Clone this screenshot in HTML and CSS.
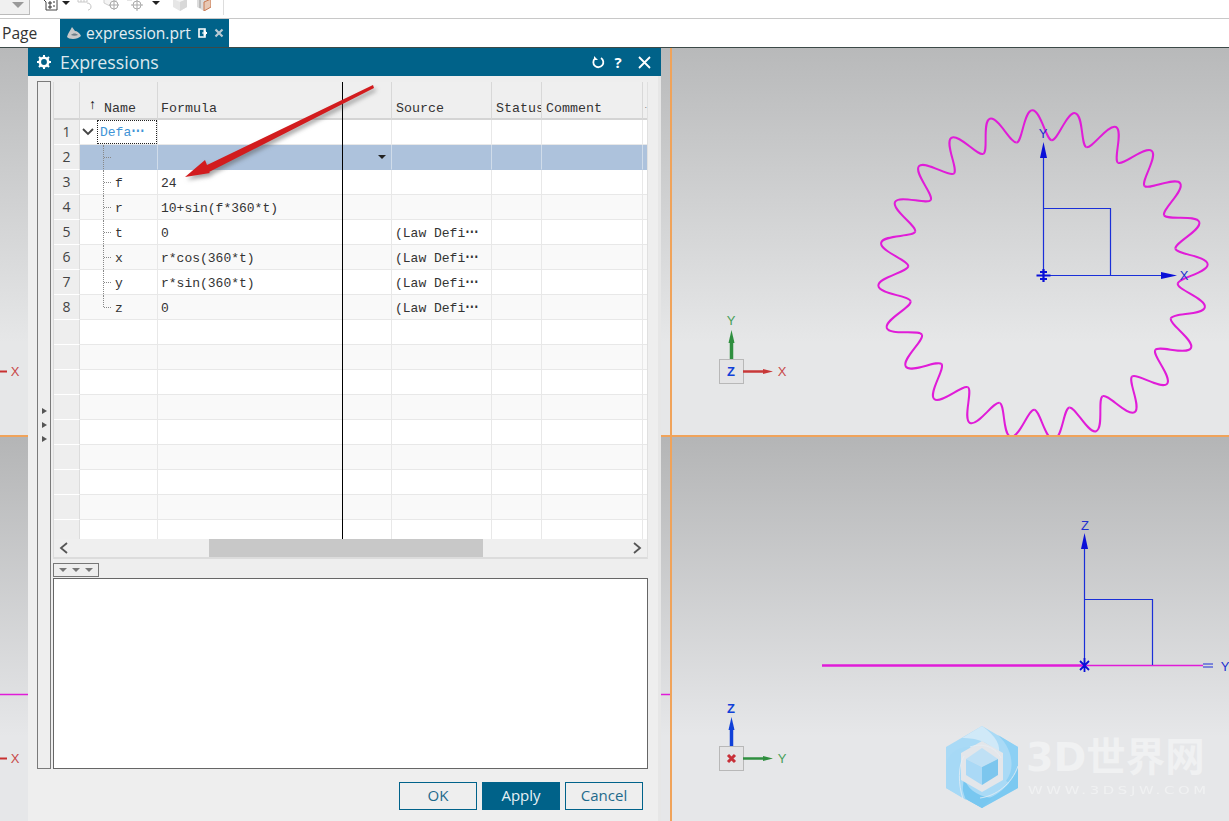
FILE: index.html
```html
<!DOCTYPE html>
<html lang="en">
<head>
<meta charset="utf-8">
<title>Expressions</title>
<link rel="stylesheet" href="styles.css">
</head>
<body>
<div class="app">
  <div class="toolbar">
    <div class="combo"><span class="combo-arrow"></span></div>
    <svg class="tool t1" width="16" height="16" viewBox="0 0 16 16"><path d="M1 4l3 3v8h11V4H5" fill="#fff" stroke="#444"/><path d="M7 7h2v2H7zM11 7h2M7 11h2v2H7zM11 11h2" fill="none" stroke="#333"/></svg>
    <span class="drop d1"></span>
    <svg class="tool t2" width="16" height="16" viewBox="0 0 16 16"><path d="M1 0v7h9V0M4 0v7M7 0v7M1 3h9" fill="none" stroke="#c8c8c8"/><path d="M10 8c3 0 4 2 4 4s-2 3-3 3" fill="none" stroke="#c4c4c4"/></svg>
    <svg class="tool t3" width="16" height="16" viewBox="0 0 16 16"><path d="M1 3l6-3 6 3v5l-6 3-6-3z" fill="#f4f4f4" stroke="#d0d0d0"/><circle cx="11" cy="10" r="4" fill="#fff" stroke="#aaa"/><path d="M11 5v10M6 10h10" stroke="#aaa"/></svg>
    <svg class="tool t4" width="16" height="16" viewBox="0 0 16 16"><path d="M0 5h5" stroke="#ccc"/><circle cx="10" cy="10" r="4" fill="#fff" stroke="#aaa"/><path d="M10 4v12M4 10h12" stroke="#aaa"/></svg>
    <span class="drop d2"></span>
    <svg class="tool t5" width="16" height="16" viewBox="0 0 16 16"><path d="M1 4l7-3 7 3v8l-7 4-7-4z" fill="#e6e6e6"/><path d="M1 4l7 3 7-3-7-3z" fill="#f4f4f4"/><path d="M8 7v9l7-4V4z" fill="#d8d8d8"/></svg>
    <svg class="tool t6" width="14" height="16" viewBox="0 0 14 16"><path d="M0 4l7-3 7 3v8l-7 4-7-4z" fill="#ddd"/><path d="M7 7v9l7-4V4z" fill="#e8c8b4" stroke="#c87850"/><path d="M3 4v9" stroke="#999"/></svg>
    <span class="sep"></span>
  </div>

  <div class="tabbar">
    <span class="tab-plain">Page</span>
    <div class="tab-active">
      <svg class="tab-icon" width="16" height="14" viewBox="0 0 16 14"><path d="M1 11c1-4 3-6 5-10l3 4c2 0 5 2 6 5-2 2-5 3-8 3-3 0-5-1-6-2z" fill="#c9c9c9"/><path d="M5 9c2-2 5-2 7 0-2 1-5 1-7 0z" fill="#6f7f88"/></svg>
      <span>expression.prt</span>
      <svg class="tab-pop" width="10" height="10" viewBox="0 0 10 10"><path d="M7 3V1H1v8h6V7" fill="none" stroke="#fff" stroke-width="1.600"/><path d="M4 5h3M6 2l3 3-3 3z" fill="#fff" stroke="#fff"/></svg>
      <svg class="tab-x" width="10" height="10" viewBox="0 0 10 10"><path d="M1.500 1.500l7 7M8.500 1.500l-7 7" stroke="#b9cad3" stroke-width="2.200"/></svg>
    </div>
  </div>

  <div class="workspace">
    <div class="viewport vp-top vp-left">
      <svg class="scene" viewBox="0 48 670 387">
        <path d="M0 371.500H7" stroke="#c83030" stroke-width="2"/>
        <text class="lbl red" x="15" y="376" text-anchor="middle">X</text>
      </svg>
    </div>
    <div class="viewport vp-top">
      <svg class="scene" viewBox="672 48 557 387">
        <defs>
          <path id="tooth" d="M133.850 -17.620C134.630 -11.670 165 -8.500 165 0C165 8.500 134.630 11.670 133.850 17.620" fill="none" stroke="#e01cd8" stroke-width="2"/>
        </defs>
        <g transform="translate(1043 275)">
          <use href="#tooth" transform="rotate(-3.750)"/><use href="#tooth" transform="rotate(11.250)"/><use href="#tooth" transform="rotate(26.250)"/><use href="#tooth" transform="rotate(41.250)"/>
          <use href="#tooth" transform="rotate(56.250)"/><use href="#tooth" transform="rotate(71.250)"/><use href="#tooth" transform="rotate(86.250)"/><use href="#tooth" transform="rotate(101.250)"/>
          <use href="#tooth" transform="rotate(116.250)"/><use href="#tooth" transform="rotate(131.250)"/><use href="#tooth" transform="rotate(146.250)"/><use href="#tooth" transform="rotate(161.250)"/>
          <use href="#tooth" transform="rotate(176.250)"/><use href="#tooth" transform="rotate(191.250)"/><use href="#tooth" transform="rotate(206.250)"/><use href="#tooth" transform="rotate(221.250)"/>
          <use href="#tooth" transform="rotate(236.250)"/><use href="#tooth" transform="rotate(251.250)"/><use href="#tooth" transform="rotate(266.250)"/><use href="#tooth" transform="rotate(281.250)"/>
          <use href="#tooth" transform="rotate(296.250)"/><use href="#tooth" transform="rotate(311.250)"/><use href="#tooth" transform="rotate(326.250)"/><use href="#tooth" transform="rotate(341.250)"/>
        </g>
        <path d="M1043.500 275V155M1043 275.500H1165M1043.500 208.500H1110.500V275" fill="none" stroke="#1a2fd8" stroke-width="1.200"/>
        <path d="M1043.500 142l3.500 16h-7zM1177 275.500l-16 3.500v-7z" fill="#0a10d8"/>
        <path d="M1036.500 275.500h14M1043.500 269v13M1040 272h7M1040 279h7" fill="none" stroke="#0a10d8" stroke-width="2.200"/>
        <text class="lbl blue" x="1043" y="138" text-anchor="middle">Y</text>
        <text class="lbl blue" x="1184" y="280" text-anchor="middle">X</text>
        <rect x="719.500" y="359.500" width="24" height="24" fill="#e4e4e5" stroke="#b8b8b8"/>
        <path d="M731.500 359V340" stroke="#2f8f3f" stroke-width="3.500"/><path d="M731.500 330l3 13h-6z" fill="#2f8f3f"/>
        <path d="M743 371.500h24" stroke="#c83838" stroke-width="2.500"/><path d="M773 371.500l-10 2.500v-5z" fill="#c83838"/>
        <text class="lbl green" x="731" y="325" text-anchor="middle">Y</text>
        <text class="lbl red" x="782" y="376" text-anchor="middle">X</text>
        <text class="lbl bluebold" x="731" y="376" text-anchor="middle">Z</text>
      </svg>
    </div>
    <div class="viewport vp-bottom vp-left">
      <svg class="scene" viewBox="0 437 670 384">
        <path d="M0 694.500H28M661 694.500H670" stroke="#e01cd8" stroke-width="1.600"/>
        <path d="M0 758.500H7" stroke="#c83030" stroke-width="2"/>
        <text class="lbl red" x="15" y="763" text-anchor="middle">X</text>
      </svg>
    </div>
    <div class="viewport vp-bottom">
      <svg class="scene" viewBox="672 437 557 384">
        <path d="M822 665.500H1084" stroke="#e01cd8" stroke-width="2.600"/>
        <path d="M1084 665.500H1203" stroke="#e01cd8" stroke-width="1.300"/>
        <path d="M1084.500 665V547M1084.500 599.500H1152.500V665" fill="none" stroke="#1a2fd8" stroke-width="1.200"/>
        <path d="M1084.500 533l3.500 16h-7z" fill="#0a10d8"/>
        <path d="M1203 664h10M1203 667h10" stroke="#1a2fd8" stroke-width="1.200"/>
        <path d="M1080 661l9 9M1089 661l-9 9M1084.500 658v14" stroke="#0a10d8" stroke-width="1.800"/>
        <text class="lbl blue" x="1085" y="530" text-anchor="middle">Z</text>
        <text class="lbl blue" x="1225" y="671" text-anchor="middle">Y</text>
        <rect x="719.500" y="746.500" width="24" height="24" fill="#e4e4e5" stroke="#b8b8b8"/>
        <path d="M731.500 746V727" stroke="#1040d8" stroke-width="3.500"/><path d="M731.500 717l3 13h-6z" fill="#1040d8"/>
        <path d="M743 758.500h24" stroke="#2f8f3f" stroke-width="2.500"/><path d="M773 758.500l-10 2.500v-5z" fill="#2f8f3f"/>
        <text class="lbl bluebold" x="731" y="713" text-anchor="middle">Z</text>
        <text class="lbl green" x="782" y="763" text-anchor="middle">Y</text>
        <path d="M728 755l7 7M735 755l-7 7" stroke="#c83038" stroke-width="3"/>
      </svg>
      <div class="watermark">
        <svg class="wm-logo" width="72" height="84" viewBox="0 0 72 84">
          <path d="M36 0L72 21V62L36 82L0 62V21z" fill="#a9daf6"/>
          <path d="M36 0L16 12C30 12 46 16 52 30C56 20 50 10 36 0z" fill="#d0e9f8"/>
          <path d="M52 9L72 21V62L60 55C70 42 66 22 52 9z" fill="#8dd0f4"/>
          <path d="M72 42V62L36 82L22 74C40 78 62 66 72 42z" fill="#7cc9f1"/>
          <path d="M18 50C20 62 30 70 46 72L36 82L16 71z" fill="#78c7f0"/>
          <path d="M0 40C2 26 14 20 24 21L15 30C13 42 14 58 20 74L0 62z" fill="#a6d9f6"/>
          <path d="M36 15L57 27V54L36 66L15 54V27z" fill="#e3e6ea"/>
          <path d="M36 22L52 33L36 41L20 33z" fill="#bfe0f5"/>
          <path d="M20 33L36 41V59L20 49z" fill="#aad9f6"/>
          <path d="M52 33L36 41V59L52 49z" fill="#7cc6ee"/>
          <path d="M17 73C12 58 12 40 18 30M24 21C38 16 50 22 55 32M72 40C66 58 50 70 34 72" fill="none" stroke="#e6eef4" stroke-width=".8"/>
        </svg>
        <div class="wm-text">
          <div class="wm-main">3D世界网</div>
          <div class="wm-url">WWW.3DSJW.COM</div>
        </div>
      </div>
    </div>

    <section class="dialog">
      <header class="dlg-head">
        <svg class="dlg-gear" width="14" height="14" viewBox="0 0 14 14"><circle cx="7" cy="7" r="4.200" fill="none" stroke="#fff" stroke-width="2.600"/><path d="M7 0v3M7 11v3M0 7h3M11 7h3M2 2l2 2M10 10l2 2M12 2l-2 2M4 10l-2 2" stroke="#fff" stroke-width="2"/></svg>
        <span class="dlg-title">Expressions</span>
        <svg class="dlg-btn" width="14" height="14" viewBox="0 0 14 14"><path d="M4 3.500A5 5 0 1 0 10 3" fill="none" stroke="#fff" stroke-width="1.800"/><path d="M3 1v4h4z" fill="#fff"/></svg>
        <span class="dlg-q">?</span>
        <svg class="dlg-close" width="13" height="13" viewBox="0 0 13 13"><path d="M1 1l11 11M12 1L1 12" stroke="#fff" stroke-width="1.800"/></svg>
      </header>
      <div class="dlg-body">
        <aside class="strip">
          <span class="strip-tri"></span><span class="strip-tri"></span><span class="strip-tri"></span>
        </aside>
        <div class="dlg-main">
          <div class="grid-wrap">
            <div class="grid-clip">
              <table class="grid">
                <colgroup><col class="c0"><col class="c1"><col class="c2"><col class="c3"><col class="c4"><col class="c5"><col class="c6"></colgroup>
                <thead>
                  <tr><th class="rn"></th><th class="name-h"><span class="sort">↑</span>Name</th><th>Formula</th><th>Source</th><th>Status</th><th>Comment</th><th class="th-last">.</th></tr>
                </thead>
                <tbody>
                  <tr><td class="rn">1</td><td class="group"><svg class="chev" width="12" height="8" viewBox="0 0 12 8"><path d="M1 1l5 5 5-5" fill="none" stroke="#444" stroke-width="1.800"/></svg><span class="group-name">Defa<span class="ell">…</span></span></td><td></td><td></td><td></td><td></td><td></td></tr>
                  <tr class="sel"><td class="rn">2</td><td class="leaf"></td><td class="combo-cell"><span class="cell-arrow"></span></td><td></td><td></td><td></td><td></td></tr>
                  <tr><td class="rn">3</td><td class="leaf">f</td><td>24</td><td></td><td></td><td></td><td></td></tr>
                  <tr class="alt"><td class="rn">4</td><td class="leaf">r</td><td>10+sin(f*360*t)</td><td></td><td></td><td></td><td></td></tr>
                  <tr><td class="rn">5</td><td class="leaf">t</td><td>0</td><td>(Law Defi<span class="ell">…</span></td><td></td><td></td><td></td></tr>
                  <tr class="alt"><td class="rn">6</td><td class="leaf">x</td><td>r*cos(360*t)</td><td>(Law Defi<span class="ell">…</span></td><td></td><td></td><td></td></tr>
                  <tr><td class="rn">7</td><td class="leaf">y</td><td>r*sin(360*t)</td><td>(Law Defi<span class="ell">…</span></td><td></td><td></td><td></td></tr>
                  <tr class="alt"><td class="rn">8</td><td class="leaf last">z</td><td>0</td><td>(Law Defi<span class="ell">…</span></td><td></td><td></td><td></td></tr>
                  <tr><td class="rn"></td><td></td><td></td><td></td><td></td><td></td><td></td></tr>
                  <tr class="alt"><td class="rn"></td><td></td><td></td><td></td><td></td><td></td><td></td></tr>
                  <tr><td class="rn"></td><td></td><td></td><td></td><td></td><td></td><td></td></tr>
                  <tr class="alt"><td class="rn"></td><td></td><td></td><td></td><td></td><td></td><td></td></tr>
                  <tr><td class="rn"></td><td></td><td></td><td></td><td></td><td></td><td></td></tr>
                  <tr class="alt"><td class="rn"></td><td></td><td></td><td></td><td></td><td></td><td></td></tr>
                  <tr><td class="rn"></td><td></td><td></td><td></td><td></td><td></td><td></td></tr>
                  <tr class="alt"><td class="rn"></td><td></td><td></td><td></td><td></td><td></td><td></td></tr>
                  <tr><td class="rn"></td><td></td><td></td><td></td><td></td><td></td><td></td></tr>
                </tbody>
              </table>
              <span class="cursor-line"></span>
              <svg class="red-arrow" width="200" height="100" viewBox="180 82 200 100">
                <path d="M373 85L374 88L209 172L210 173L185 177L205 160L207 165z" fill="#d21c1e"/>
              </svg>
            </div>
            <div class="hscroll">
              <svg class="hs-arrow" width="10" height="12" viewBox="0 0 10 12"><path d="M8 1L2 6l6 5" fill="none" stroke="#555" stroke-width="1.800"/></svg>
              <div class="hs-track"><div class="hs-thumb"></div></div>
              <svg class="hs-arrow" width="10" height="12" viewBox="0 0 10 12"><path d="M2 1l6 5-6 5" fill="none" stroke="#555" stroke-width="1.800"/></svg>
            </div>
          </div>
          <div class="expander"><span></span><span></span><span></span></div>
          <div class="editor"></div>
          <div class="actions">
            <button class="btn">OK</button>
            <button class="btn primary">Apply</button>
            <button class="btn">Cancel</button>
          </div>
        </div>
      </div>
    </section>
  </div>
</div>
</body>
</html>
```

FILE: styles.css
```css
* { box-sizing: border-box; }
html, body { margin: 0; padding: 0; height: 100%; overflow: hidden; background: #fff; }
body { font-family: "Open Sans", "Noto Sans", sans-serif; color: #333; }
.app { width: 1229px; height: 821px; display: flex; flex-direction: column; overflow: hidden; }

/* top toolbar */
.toolbar { height: 19px; flex: none; display: flex; align-items: flex-start; border-bottom: 1px solid #c8c8c8; background: #fff; overflow: hidden; }
.combo { width: 30px; height: 15px; background: #f0f0f0; border: 1px solid #bbb; border-top: 0; border-left: 0; display: flex; justify-content: flex-end; padding: 1px 5px 0 0; }
.combo-arrow { width: 0; height: 0; border: 6px solid transparent; border-top: 6px solid #999; border-bottom: 0; margin-top: 1px; }
.tool { display: block; margin-top: -5px; flex: none; }
.t1 { margin-left: 12px; }
.d1 { margin-left: 4px; }
.t2 { margin-left: 7px; }
.t3 { margin-left: 10px; }
.t4 { margin-left: 8px; }
.d2 { margin-left: 9px; }
.t5 { margin-left: 12px; }
.t6 { margin-left: 9px; }
.drop { width: 0; height: 0; border: 4px solid transparent; border-top: 4px solid #222; border-bottom: 0; margin-top: 1px; flex: none; }
.sep { width: 1px; height: 15px; background: #ddd; margin-left: 12px; }

/* document tabs */
.tabbar { height: 29px; flex: none; display: flex; align-items: stretch; background: #fff; border-bottom: 1px solid #3c4a48; }
.tab-plain { width: 60px; padding-left: 2px; font-size: 15.600px; line-height: 28px; color: #333; }
.tab-active { width: 169px; background: #006289; color: #e4eef3; font-size: 15.600px; line-height: 28px; display: flex; align-items: center; padding-left: 6px; height: 28px; }
.tab-icon { margin-right: 4px; flex: none; }
.tab-pop { margin-left: 7px; flex: none; }
.tab-x { margin-left: 6px; flex: none; }

/* 3D workspace */
.workspace { flex: 1; position: relative; display: grid; grid-template-columns: 672px 1fr; grid-template-rows: 389px 1fr; min-height: 0; }
.viewport { position: relative; overflow: hidden; }
.vp-top { background: linear-gradient(#b8b9ba 0, #e6e7e8 76%); border-bottom: 2px solid #f0a35a; }
.vp-bottom { background: linear-gradient(#b4b5b6 0, #e6e7e9 78%); }
.vp-left { border-right: 2px solid #f0a35a; }
.scene { display: block; width: 100%; height: 100%; }
.lbl { font-family: "Liberation Sans", sans-serif; font-size: 13px; }
.lbl.red { fill: #c84848; }
.lbl.blue { fill: #2030d0; }
.lbl.green { fill: #48a058; }
.lbl.bluebold { fill: #1040d8; font-weight: 700; }

/* watermark */
.watermark { position: absolute; left: 274px; top: 289px; display: flex; align-items: flex-start; gap: 8px; pointer-events: none; }
.wm-logo { display: block; flex: none; }
.wm-text { margin-top: 10px; }
.wm-main { font-family: "DejaVu Sans", "Noto Sans CJK SC", sans-serif; font-weight: 700; font-size: 39.500px; line-height: 42px; color: #f0f1f2; white-space: nowrap; }
.wm-url { font-family: "DejaVu Sans", sans-serif; font-size: 11px; line-height: 12px; margin: 7px 0 0 2px; letter-spacing: 2.700px; color: #f0f1f2; white-space: nowrap; transform: scaleX(1.350); transform-origin: left center; }

/* dialog */
.dialog { position: absolute; left: 28px; top: 0; width: 633px; height: 773px; background: #eeeeee; display: flex; flex-direction: column; border-right: 3px solid #e6e6e6; }
.dlg-head { height: 28px; flex: none; background: #006289; display: flex; align-items: center; padding: 0 10px 0 9px; color: #fff; margin-right: -3px; }
.dlg-gear { flex: none; margin-right: 9px; }
.dlg-title { font-size: 17.800px; color: #dbe8ee; flex: 1; }
.dlg-btn { flex: none; }
.dlg-q { font-size: 15px; font-weight: 700; width: 14px; text-align: center; margin: 0 13px 0 6px; }
.dlg-close { flex: none; }
.dlg-body { flex: 1; display: flex; padding: 5px 10px 0 9px; min-height: 0; }
.strip { width: 14px; height: 688px; flex: none; margin-right: 2px; border: 1px solid #7a7a7a; background: #eeeeee; display: flex; flex-direction: column; align-items: center; padding-top: 326px; gap: 8px; }
.strip-tri { width: 0; height: 0; border: 3.500px solid transparent; border-left: 5px solid #555; border-right: 0; }
.dlg-main { flex: 1; min-width: 0; display: flex; flex-direction: column; }

/* table */
.grid-wrap { width: 595px; height: 477px; margin-top: 1px; flex: none; border: 1px solid #dcdcdc; border-top: 0; border-right: 1px solid #e0e0e0; display: flex; flex-direction: column; background: #fff; }
.grid-clip { height: 457px; position: relative; overflow: hidden; flex: none; }
.grid { table-layout: fixed; width: 594px; border-collapse: separate; border-spacing: 0; font-family: "Liberation Mono", monospace; font-size: 13px; color: #333; }
.c0 { width: 26px; } .c1 { width: 78px; } .c2 { width: 234px; } .c3 { width: 100px; } .c4 { width: 50px; } .c5 { width: 101px; }
.grid thead tr { height: 38px; }
.grid th { background: #efefef; font-weight: 400; font-size: 13.300px; text-align: left; vertical-align: bottom; padding: 0 0 1px 3px; line-height: 16px; border-right: 1px solid #d8d8d8; border-bottom: 2px solid #d4d4d4; overflow: hidden; white-space: nowrap; }
.grid th:nth-child(n+4) { padding-left: 4px; }
.grid th.rn { background: #efefef; }
.grid th.name-h { padding-left: 9px; }
.grid th.th-last { font-size: 6px; padding-left: 1px; padding-bottom: 3px; border-right: 0; }
.sort { font-family: "Liberation Sans", sans-serif; font-size: 14px; color: #111; margin-right: 8px; position: relative; top: -3px; }
.grid tbody tr { height: 25px; }
.grid td { padding: 4px 0 0 3px; height: 25px; border-right: 1px solid #e8e8e8; border-bottom: 1px solid #e8e8e8; white-space: nowrap; line-height: 16px; }
.grid td.rn { background: #eeeeee; font-family: "Open Sans", sans-serif; font-size: 14px; color: #444; text-align: center; padding: 0; border-right: 1px solid #dcdcdc; border-bottom: 1px solid #fff; }
.alt td { background: #f9f9f9; }
.sel td { background: #adc2dc; border-right-color: #d0dcea; border-bottom-color: #adc2dc; }
.ell { font-size: 22px; line-height: 0; position: relative; top: -4px; }
.grid td.group { padding: 0; line-height: 0; }
.chev { display: inline-block; margin: 0 3px 0 2px; vertical-align: middle; }
.group-name { display: inline-block; width: 60px; height: 24px; border: 1px dotted #222; color: #3f93d6; padding: 1px 0 0 2px; line-height: 22px; vertical-align: middle; }
.grid td.leaf { position: relative; padding-left: 35px; }
.leaf::before { content: ""; position: absolute; left: 23px; top: 0; bottom: 0; border-left: 1px dotted #888; }
.leaf::after { content: ""; position: absolute; left: 24px; top: 50%; width: 7px; border-top: 1px dotted #888; }
.leaf.last::before { bottom: 50%; }
.grid td.combo-cell { text-align: right; padding: 0 5px 0 0; }
.cell-arrow { display: inline-block; width: 0; height: 0; border: 4px solid transparent; border-top: 4px solid #222; border-bottom: 0; vertical-align: middle; }
.cursor-line { position: absolute; left: 288px; top: 0; bottom: 0; width: 1px; background: #000; }
.red-arrow { position: absolute; left: 126px; top: 0; filter: drop-shadow(2px 3px 2px rgba(90,90,90,.55)); }

/* scrollbar */
.hscroll { height: 19px; flex: none; background: #efefef; display: flex; align-items: center; padding: 0 5px; border-bottom: 1px solid #dcdcdc; }
.hs-arrow { flex: none; }
.hs-track { flex: 1; height: 18px; padding-left: 140px; }
.hs-thumb { width: 274px; height: 18px; background: #c8c8c8; }

/* bottom */
.expander { width: 46px; height: 14px; flex: none; margin-top: 4px; border: 1px solid #777; display: flex; justify-content: space-around; align-items: center; padding: 0 2px; }
.expander span { width: 0; height: 0; border: 4px solid transparent; border-top: 4px solid #777; border-bottom: 0; }
.editor { width: 595px; height: 191px; flex: none; margin-top: 1px; background: #fff; border: 1px solid #666; }
.actions { width: 590px; display: flex; justify-content: flex-end; gap: 5px; margin-top: 13px; }
.btn { width: 78px; height: 28px; font-family: "Open Sans", sans-serif; font-size: 15px; color: #1f6a8c; background: #eeeeee; border: 1px solid #00628a; padding: 0 0 2px; border-radius: 0; }
.btn.primary { background: #006289; color: #e8f1f5; }
```
